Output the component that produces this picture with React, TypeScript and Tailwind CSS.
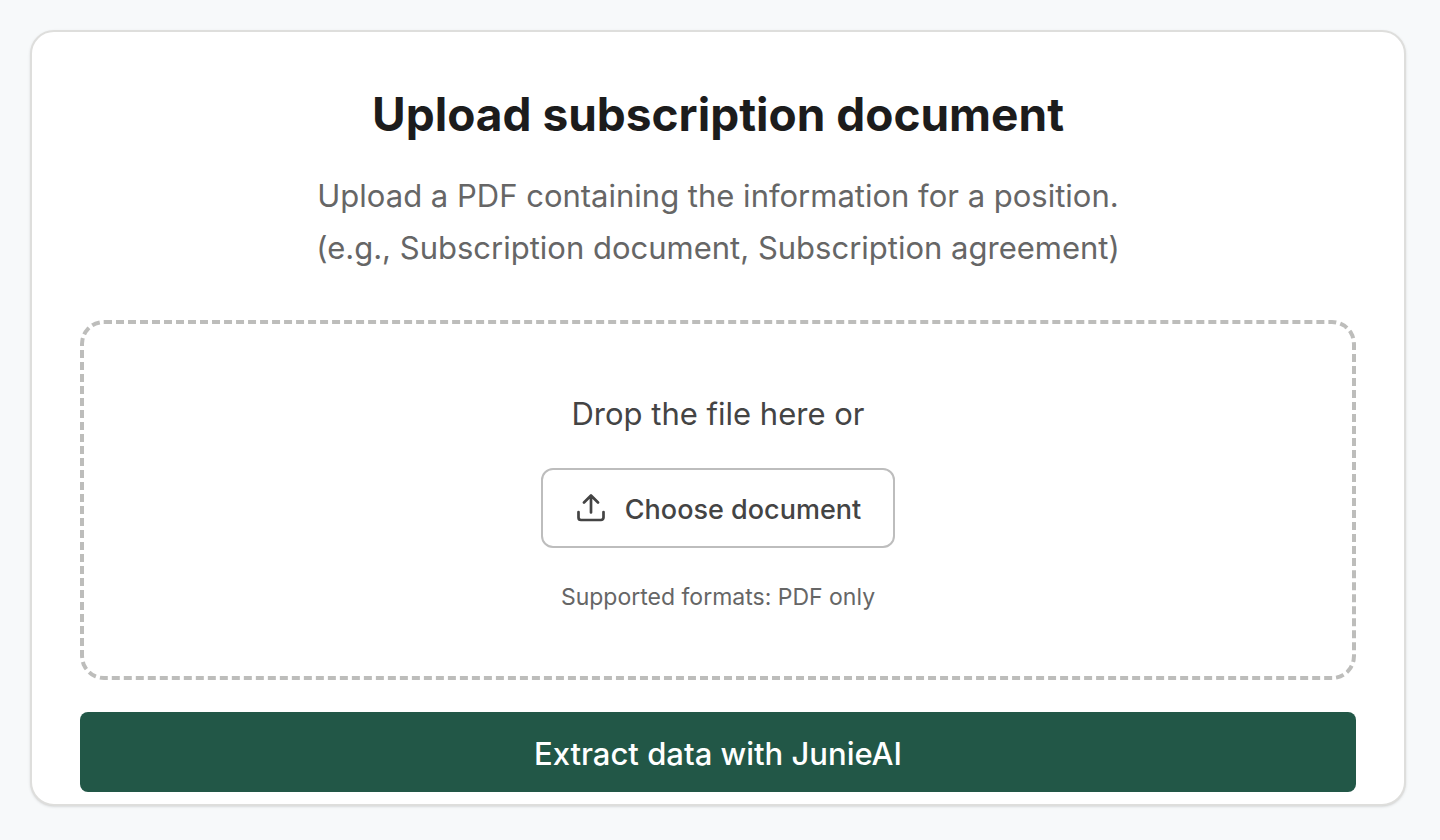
import { useRef } from "react";

export default function App() {
  const fileInput = useRef<HTMLInputElement>(null);
  return (
    <div className="min-h-screen bg-[#f7f9fa] pt-[30px] pr-[34px] pb-[34px] pl-[30px] font-['Inter',sans-serif]">
      <main className="rounded-[24px] border-2 border-[#dededc] bg-white px-12 pt-12 pb-3 text-center shadow-sm">
        <h1 className="text-[46px] leading-[68px] font-bold text-[#1c1c1c]">Upload subscription document</h1>
        <p className="mt-[22px] text-[31px] leading-[52px] text-[#666]">
          Upload a PDF containing the information for a position.
          <br />
          (e.g., Subscription document, Subscription agreement)
        </p>
        <section className="mt-[46px] flex flex-col items-center rounded-[24px] border-4 border-dashed border-[#bdbdbb] pt-16 pb-[62px]">
          <p className="text-[31px] leading-[52px] text-[#444]">Drop the file here or</p>
          <button
            type="button"
            onClick={() => fileInput.current?.click()}
            className="mt-7 flex h-20 items-center gap-[18px] rounded-xl border-2 border-[#bdbdbd] bg-white px-8 text-[27px] font-medium text-[#444]"
          >
            <svg
              className="size-8"
              viewBox="0 0 32 32"
              fill="none"
              stroke="currentColor"
              strokeWidth="2.7"
              strokeLinecap="round"
              strokeLinejoin="round"
              aria-hidden="true"
            >
              <path d="M3.5 20v5.5a2.5 2.5 0 0 0 2.5 2.5h20a2.5 2.5 0 0 0 2.5-2.5V20M16 20.5V3.5M9 10.5l7-7 7 7" />
            </svg>
            <span className="pt-1">Choose document</span>
          </button>
          <input ref={fileInput} type="file" accept="application/pdf" aria-label="Choose document" className="hidden" />
          <p className="mt-8 text-[23px] leading-[34px] text-[#666]">Supported formats: PDF only</p>
        </section>
        <button type="button" className="mt-8 h-20 w-full rounded-lg bg-[#225747] pt-1 text-[31px] font-medium text-white">
          Extract data with JunieAI
        </button>
      </main>
    </div>
  );
}
